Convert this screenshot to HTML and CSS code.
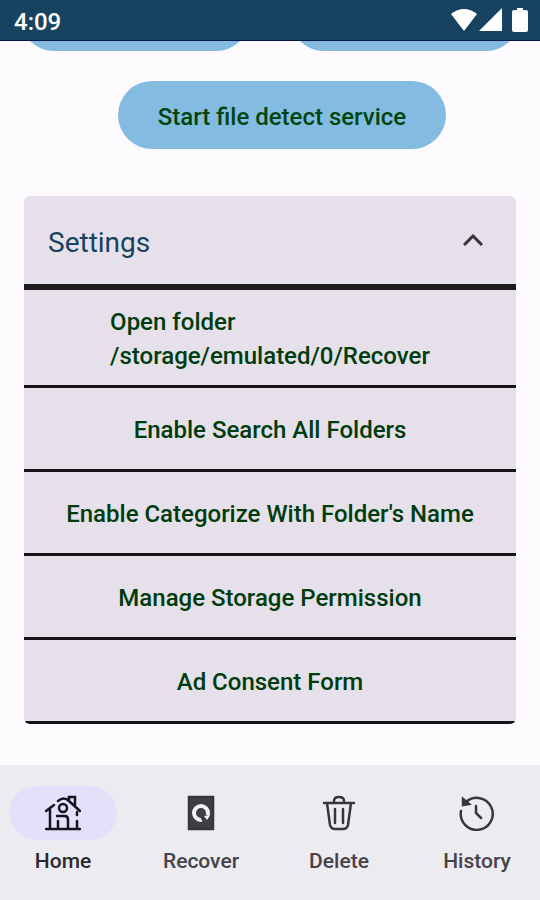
FILE: index.html
```html
<!DOCTYPE html>
<html lang="en">
<head>
<meta charset="utf-8">
<meta name="viewport" content="width=device-width, initial-scale=1">
<title>Recover</title>
<link rel="stylesheet" href="styles.css">
</head>
<body>
<header class="status">
  <time>4:09</time>
  <div class="status-icons">
    <svg width="28" height="24" viewBox="0 0 28 24" aria-hidden="true"><path d="M1 6Q14-4 27 6L14 23Z"/></svg>
    <svg width="24" height="24" viewBox="0 0 24 24" aria-hidden="true"><path d="M1 23H24V0Z"/></svg>
    <svg width="16" height="24" viewBox="0 0 16 24" aria-hidden="true"><path d="M5 0h6v2h3q2 0 2 2v18q0 2-2 2H2q-2 0-2-2V4q0-2 2-2h3Z"/></svg>
  </div>
</header>
<main class="content">
  <div class="pair">
    <button class="pill" type="button" aria-label="Scan"></button>
    <button class="pill" type="button" aria-label="Recover files"></button>
  </div>
  <button class="pill service" type="button">Start file detect service</button>
  <section class="card">
    <button class="card-head" type="button" aria-expanded="true">
      <span>Settings</span>
      <svg width="20" height="12" viewBox="0 0 20 12" aria-hidden="true"><path d="M1 11L10 2L19 11"/></svg>
    </button>
    <button class="row folder" type="button"><span>Open folder<br>/storage/emulated/0/Recover</span></button>
    <button class="row" type="button">Enable Search All Folders</button>
    <button class="row" type="button">Enable Categorize With Folder's Name</button>
    <button class="row" type="button">Manage Storage Permission</button>
    <button class="row" type="button">Ad Consent Form</button>
  </section>
</main>
<nav class="nav">
  <a class="tab active" href="#home">
    <span class="badge"><svg width="36" height="36" viewBox="0 0 36 36" aria-hidden="true"><path d="M1 34H35M5 33V14M1 16L9 10M13 6Q19 1 24 6L35 16M24 5V2H30V10M32 17V20M32 26V33M13 33V26M12 21H20Q23 21 23 25V33"/><circle cx="18" cy="13" r="4"/></svg></span>
    <span>Home</span>
  </a>
  <a class="tab" href="#recover">
    <span class="badge"><svg width="28" height="36" viewBox="0 0 28 36" aria-hidden="true"><path class="solid" d="M2 2H26V34H2Z"/><circle class="light" cx="14" cy="18" r="7"/><path class="knob" d="M11 17L14 15L18 19L22 21L20 23L22 28H16Z"/><path class="tip" d="M17 21L23 20L20 25Z"/></svg></span>
    <span>Recover</span>
  </a>
  <a class="tab" href="#delete">
    <span class="badge"><svg width="34" height="36" viewBox="0 0 34 36" aria-hidden="true"><path d="M2 8H32M12 8V6Q12 2 17 2Q22 2 22 6V8M5 8L8 30Q9 34 13 34H21Q25 34 26 30L29 8M13 14V28M21 14V28"/></svg></span>
    <span>Delete</span>
  </a>
  <a class="tab" href="#history">
    <span class="badge"><svg width="36" height="36" viewBox="0 0 36 36" aria-hidden="true"><path d="M2 16A16 16 0 1 0 7 7M17 11V18L22 23"/><path class="solid" d="M4 4L4 10L10 9Z"/></svg></span>
    <span>History</span>
  </a>
</nav>
</body>
</html>
```
FILE: styles.css
```css
* { box-sizing: border-box; }
body {
  margin: 0;
  min-height: 100vh;
  display: flex;
  flex-direction: column;
  background: #fefbff;
  font-family: Roboto, "Liberation Sans", sans-serif;
}
button { border: 0; margin: 0; padding: 0; font: inherit; color: inherit; }

.status {
  display: flex;
  justify-content: space-between;
  align-items: center;
  height: 41px;
  padding: 0 12px 0 14px;
  background: #184360;
  border-bottom: 1px solid #08174a;
  color: #fff;
  font-size: 24px;
  font-weight: 500;
}
.status time { padding-top: 3px; }
.status-icons { display: flex; fill: #fff; }
.status-icons svg:last-child { margin-left: 10px; }

.content { flex: 1; overflow: hidden; display: flex; flex-direction: column; }
.pair { display: flex; gap: 40px; margin: -58px 20px 30px; }
.pair .pill { flex: 1; }
.pill {
  height: 68px;
  border-radius: 34px;
  background: #83bce0;
  color: #00450f;
  font-size: 24px;
  font-weight: 500;
}
.service { align-self: center; margin-left: 24px; padding: 4px 40px 0; }

.card {
  margin: 47px 24px 0;
  border-radius: 6px;
  overflow: hidden;
  background: #e5e0e9;
  display: flex;
  flex-direction: column;
}
.card-head {
  display: flex;
  justify-content: space-between;
  align-items: center;
  height: 94px;
  padding: 0 33px 0 24px;
  background: none;
  border-bottom: 6px solid #1b1b1d;
  color: #184360;
  font-size: 28px;
}
.card-head span { padding-top: 4px; }
.card-head svg { fill: none; stroke: #37343b; stroke-width: 3; }
.row {
  height: 84px;
  padding-top: 3px;
  background: none;
  border-bottom: 3px solid #17131b;
  color: #003c0d;
  font-size: 24px;
  font-weight: 500;
  line-height: 34px;
}
.folder { height: 98px; }
.folder span { display: inline-block; text-align: left; }

.nav {
  display: flex;
  gap: 12px;
  height: 135px;
  padding: 21px 0 0;
  background: #ecebf0;
}
.tab {
  flex: 1;
  display: flex;
  flex-direction: column;
  align-items: center;
  gap: 8px;
  color: #45434b;
  font-size: 21px;
  font-weight: 500;
  line-height: 26px;
  text-decoration: none;
}
.badge {
  display: flex;
  align-items: center;
  justify-content: center;
  width: 108px;
  height: 54px;
  border-radius: 27px;
}
.active { color: #2c2931; }
.active .badge { background: #e6dff9; }
.badge svg { fill: none; stroke: #38353e; stroke-width: 2.5; stroke-linecap: round; }
.badge .solid { fill: #403d46; }
.active .badge svg { stroke: #17131e; }
.badge .light { stroke: #f4f2f8; stroke-width: 4; }
.badge .knob { fill: #403d46; stroke: none; }
.badge .tip { fill: #f4f2f8; stroke: none; }
```
